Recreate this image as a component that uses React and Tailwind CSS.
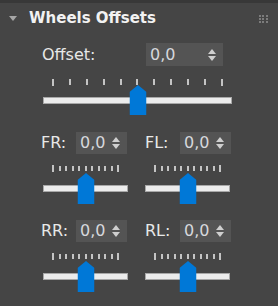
import React from 'react';

const font = { fontFamily: '"DejaVu Sans", "Liberation Sans", sans-serif' };

const Spinner = ({ width }) => (
    <div className={`flex items-center justify-between h-[22px] bg-[#545454] pl-[4px] pr-[7px] ${width}`}>
        <span className="text-[16px] leading-none text-[#d6d8dc]">0,0</span>
        <div className="flex flex-col items-center gap-[2px]">
            <svg width="8" height="5" viewBox="0 0 8 5"><polygon points="4,0 8,5 0,5" fill="#cfcfcf" /></svg>
            <svg width="8" height="5" viewBox="0 0 8 5"><polygon points="0,0 8,0 4,5" fill="#cfcfcf" /></svg>
        </div>
    </div>
);

const Thumb = ({ w, h }) => (
    <svg width={w} height={h} viewBox={`0 0 ${w} ${h}`} className="absolute left-1/2 -translate-x-1/2">
        <polygon points={`${w / 2},0 ${w},7 ${w},${h} 0,${h} 0,7`} fill="#0078d7" />
    </svg>
);

const Slider = ({ width, pad, ticks = 11, big }) => (
    <div className={`relative ${width} ${big ? 'h-[36px]' : 'h-[39px]'}`}>
        <div className={`flex justify-between items-start ${pad}`}>
            {Array.from({ length: ticks }).map((_, i) => (
                <div
                    key={i}
                    className={`w-[2px] bg-[#c4c4c4] ${i === 0 || i === ticks - 1 ? 'h-[7px]' : big ? 'h-[6px]' : 'h-[5px] mt-[1px]'}`}
                />
            ))}
        </div>
        <div className={`absolute left-0 right-0 h-[7px] bg-[#ececec] border border-[#a8a8a8] ${big ? 'top-[18px]' : 'top-[20px]'}`} />
        <div className={`absolute left-0 right-0 ${big ? 'top-[6px]' : 'top-[8px]'}`}>
            <Thumb w={17} h={big ? 30 : 31} />
        </div>
    </div>
);

const Wheel = ({ label, shift }) => (
    <div className="flex flex-col w-[104px]">
        <div className="flex items-center">
            <span className="w-[35px] text-[16px] leading-none text-[#e8e8e8]">{label}</span>
            <Spinner width="w-[51px]" />
        </div>
        <div className={`mt-[11px] ${shift}`}>
            <Slider width="w-[85px]" pad="px-[9px]" />
        </div>
    </div>
);

export default function App() {
    return (
        <div className="w-[278px] h-[306px] bg-[#454545] overflow-hidden" style={font}>
            <div className="h-[3px] bg-[#383838]" />

            <div className="h-[31px] flex items-center pl-[9px] pr-[10px]">
                <svg width="8" height="5" viewBox="0 0 8 5"><polygon points="0,0 8,0 4,5" fill="#a6a6a6" /></svg>
                <span className="ml-[12px] text-[15px] font-bold text-[#f2f2f2] leading-none">Wheels Offsets</span>
                <div className="ml-auto grid grid-cols-3 gap-[1px] w-[9px]">
                    {Array.from({ length: 9 }).map((_, i) => (
                        <div key={i} className="w-[2px] h-[2px] bg-[#7c7c7c]" />
                    ))}
                </div>
            </div>

            <div className="mt-[9px] flex items-center pl-[42px] h-[23px]">
                <span className="w-[104px] text-[16px] leading-none text-[#e8e8e8]">Offset:</span>
                <div className="h-[23px] flex">
                    <Spinner width="w-[77px] h-[23px]" />
                </div>
            </div>

            <div className="mt-[13px] pl-[43px]">
                <Slider width="w-[189px]" pad="px-[9px]" big />
            </div>

            <div className="mt-[17px] flex pl-[41px]">
                <Wheel label="FR:" shift="ml-[2px]" />
                <Wheel label="FL:" shift="ml-0" />
            </div>

            <div className="mt-[16px] flex pl-[41px]">
                <Wheel label="RR:" shift="ml-[2px]" />
                <Wheel label="RL:" shift="ml-0" />
            </div>
        </div>
    );
}
